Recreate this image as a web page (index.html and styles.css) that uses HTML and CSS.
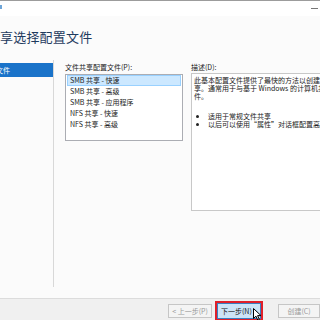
FILE: index.html
```html
<!DOCTYPE html>
<html>
<head>
<meta charset="utf-8">
<link rel="stylesheet" href="styles.css">
</head>
<body>
<div class="win">
  <div class="titlebar">
    <span class="appicon"></span>
    <span class="minbtn"></span>
  </div>
  <div class="header">
    <h1 class="title">享选择配置文件</h1>
  </div>
  <div class="content">
    <div class="nav">
      <div class="nav-item active"><span class="nav-text">选择配置文件</span></div>
    </div>
    <div class="main">
      <div class="col col-list">
        <div class="label">文件共享配置文件(P):</div>
        <div class="listbox">
          <div class="row selected">SMB 共享 - 快速</div>
          <div class="row">SMB 共享 - 高级</div>
          <div class="row">SMB 共享 - 应用程序</div>
          <div class="row">NFS 共享 - 快速</div>
          <div class="row">NFS 共享 - 高级</div>
        </div>
      </div>
      <div class="col col-desc">
        <div class="label">描述(D):</div>
        <div class="descbox">
          <p class="desc-p">此基本配置文件提供了最快的方法以创建 SMB 文件共<br>享。通常用于与基于 Windows 的计算机共享文<br>件。</p>
          <ul class="desc-list">
            <li>适用于常规文件共享</li>
            <li>以后可以使用“属性”对话框配置高级选项</li>
          </ul>
        </div>
      </div>
    </div>
  </div>
  <div class="footer">
    <button class="btn disabled">&lt; 上一步(P)</button>
    <span class="mark">
      <button class="btn primary">下一步(N) &gt;</button>
      <svg class="cursor" width="9" height="13" viewBox="0 0 9 13"><path d="M0.5 0.5 L0.5 10.5 L3 8.2 L4.8 12.2 L6.3 11.5 L4.6 7.6 L8 7.6 Z" fill="#fff" stroke="#000" stroke-width="1" stroke-linejoin="round"/></svg>
    </span>
    <button class="btn disabled create">创建(C)</button>
  </div>
</div>
</body>
</html>
```
FILE: styles.css
```css
html, body {
  margin: 0;
  padding: 0;
  width: 320px;
  height: 320px;
  overflow: hidden;
  background: #fbfbfb;
}
.win {
  width: 320px;
  height: 320px;
  display: flex;
  flex-direction: column;
  font-family: "Noto Sans CJK SC", "Noto Sans", sans-serif;
  font-size: 7px;
  color: #1e1e1e;
  overflow: hidden;
}
.titlebar {
  height: 16px;
  border-top: 1px solid #9c9c9c;
  background: #ffffff;
  display: flex;
  align-items: center;
  justify-content: space-between;
  box-sizing: border-box;
}
.appicon {
  width: 2px;
  height: 4px;
  background: #6fa6d8;
  margin-top: -4px;
}
.minbtn {
  width: 7px;
  height: 1px;
  background: #777;
  margin-right: 2px;
  margin-top: -1px;
}
.header {
  height: 44px;
}
.title {
  margin: 0;
  padding-top: 12px;
  font-size: 13px;
  font-weight: normal;
  line-height: 18px;
  color: #1e3a5e;
  letter-spacing: 0.2px;
}
.content {
  flex: 1;
  display: flex;
  min-height: 0;
}
.nav {
  width: 53px;
  flex: none;
  border-right: 1px solid #d8d8d8;
  margin-bottom: 11px;
  padding-top: 3px;
  box-sizing: content-box;
}
.nav-item {
  height: 14px;
  line-height: 14px;
  overflow: hidden;
  white-space: nowrap;
}
.nav-item.active {
  background: #1a73c9;
  color: #ffffff;
}
.nav-text {
  display: inline-block;
  margin-left: -32px;
}
.main {
  flex: 1;
  display: flex;
  gap: 8px;
  padding-left: 11px;
  padding-top: 1px;
  overflow: hidden;
  min-width: 0;
}
.col-list {
  width: 118px;
  flex: none;
}
.col-desc {
  width: 200px;
  flex: none;
}
.label {
  height: 13px;
  line-height: 12px;
  color: #222;
}
.listbox {
  height: 67px;
  border: 1px solid #abadb3;
  background: #ffffff;
  box-sizing: border-box;
  padding: 0 1px;
}
.row {
  height: 11px;
  line-height: 11px;
  padding-left: 3px;
  white-space: nowrap;
  color: #222;
  box-sizing: border-box;
}
.row.selected {
  background: #cce8ff;
  border: 1px solid #99d1ff;
  line-height: 9px;
  padding-left: 2px;
}
.descbox {
  margin-top: -1px;
  height: 138px;
  border: 1px solid #c8c8c8;
  background: #ffffff;
  box-sizing: border-box;
  padding: 2px 0 0 2px;
  overflow: hidden;
}
.desc-p {
  margin: 0;
  line-height: 8px;
  white-space: nowrap;
  color: #222;
}
.desc-list {
  margin: 12px 0 0 0;
  padding-left: 14px;
  line-height: 8px;
  white-space: nowrap;
  color: #222;
}
.footer {
  height: 22px;
  flex: none;
  border-top: 1px solid #dcdcdc;
  background: #f0f0f0;
  display: flex;
  align-items: flex-start;
  padding-left: 168px;
  padding-top: 5px;
  box-sizing: border-box;
}
.btn {
  font-family: "Noto Sans CJK SC", "Noto Sans", sans-serif;
  font-size: 7px;
  height: 14px;
  padding: 0;
  margin: 0;
  line-height: 12px;
  box-sizing: border-box;
  width: 44px;
  flex: none;
}
.btn.disabled {
  background: #f4f4f4;
  border: 1px solid #c6c6c6;
  color: #9a9a9a;
}
.mark {
  position: relative;
  margin-left: 3px;
  margin-top: -3px;
  border: 2px solid #e0202a;
  padding: 0;
  height: 20px;
  box-sizing: border-box;
  display: flex;
  flex: none;
}
.btn.primary {
  background: #cce4f7;
  border: 1px solid #3a7fc0;
  color: #111;
  width: 44px;
  height: 16px;
  text-align: left;
  padding-left: 3px;
}
.cursor {
  position: absolute;
  left: 36px;
  top: 5px;
}
.btn.create {
  margin-left: 15px;
  width: 42px;
}
```
